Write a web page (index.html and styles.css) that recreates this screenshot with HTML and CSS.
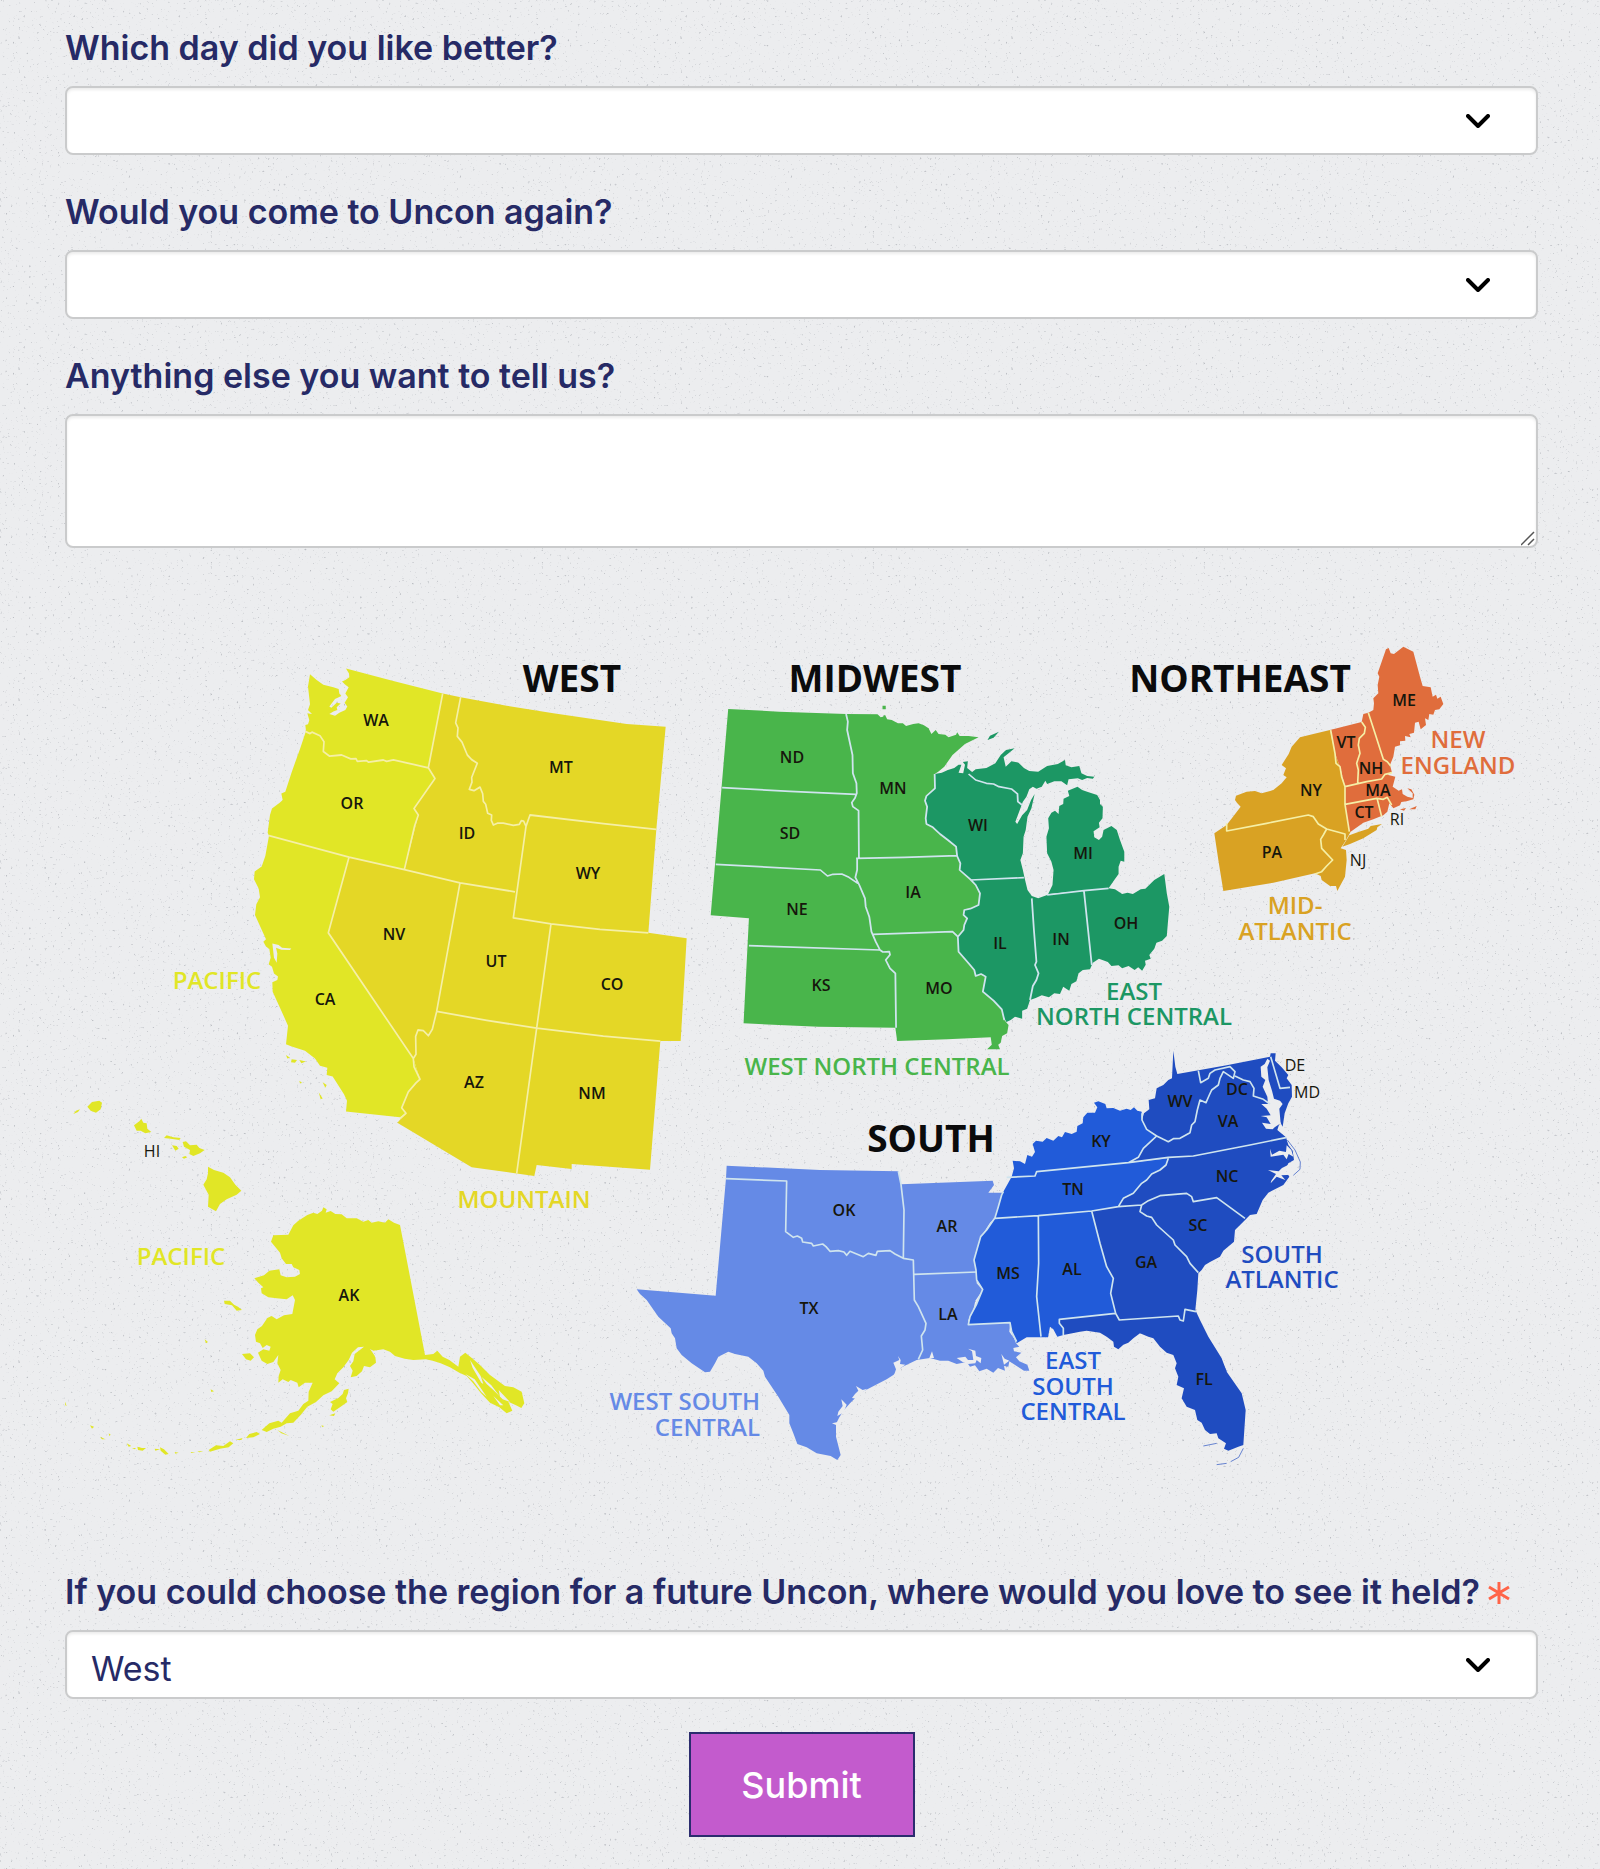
FILE: index.html
```html
<!DOCTYPE html>
<html lang="en">
<head>
<meta charset="utf-8">
<meta name="viewport" content="width=device-width, initial-scale=1">
<title>Uncon feedback</title>
<link rel="stylesheet" href="styles.css">
</head>
<body>
<form class="survey">
  <div class="field">
    <label class="field-label" for="day">Which day did you like better?</label>
    <select class="control select" id="day"><option value=""></option><option>Saturday</option><option>Sunday</option></select>
  </div>
  <div class="field">
    <label class="field-label" for="again">Would you come to Uncon again?</label>
    <select class="control select" id="again"><option value=""></option><option>Yes</option><option>No</option></select>
  </div>
  <div class="field">
    <label class="field-label" for="more">Anything else you want to tell us?</label>
    <textarea class="control textarea" id="more"></textarea>
  </div>

  <svg class="map" viewBox="65 581 1473 954" role="img" aria-label="Map of the United States by region">
    <!-- West -->
    <g transform="translate(220 640) scale(.33333 .35714)">
      <path class="mountain" d="M668 150L722 160 860 184 1000 205 1220 235 1337 243 1309 530 1285 820 1400 835 1382 1123 1321 1123 1290 1483 1055 1467 1055 1481 950 1470 943 1501 890 1494 755 1476 532 1352 558 1325 545 1310 565 1265 600 1230 580 1172 325 820 387 608 553 643 595 490 582 472 645 388 625 358Z"/>
      <path class="pacific" d="M270 96L290 112 310 125 340 132 356 137 358 150 364 157 345 165 328 186 334 190 350 176 362 178 350 188 352 196 340 200 328 207 345 212 358 204 376 196 382 186 374 176 384 160 376 150 386 132 376 125 366 116 376 112 388 104 387 94 378 80 520 115 668 150 625 358 645 388 582 472 595 490 553 643 387 608 325 820 580 1172 600 1230 588 1240 565 1265 545 1310 558 1325 540 1336 378 1320 381 1290 372 1272 350 1240 338 1222 320 1218 322 1198 300 1192 285 1172 255 1150 215 1138 198 1132 204 1080 185 1040 158 985 157 958 172 952 174 942 162 934 156 915 146 908 152 890 148 865 138 858 130 845 138 838 105 770 109 740 120 720 116 696 102 670 104 648 125 634 136 605 147 548 143 540 150 490 156 472 180 455 188 448 184 430 196 425 215 370 240 305 258 255 256 238 264 236 268 225 262 205 276 207 264 196 270 180 264 130Z"/>
      <path class="pacific" d="M198 1162l12 8-8 2zM215 1174l16 2-6 8-12-2zM238 1176l20 4-14 5zM238 1234l8 6-6 2zM308 1238l12 8-4 8zM296 1266l12 18-6 2z"/>
      <path class="water" d="M157 850L176 854 186 862 214 864 210 868 184 867 168 862 172 878 170 904 162 890Z"/>
      <path class="border warm" d="M256 256L270 262 276 258 300 268 312 285 310 312 328 325 365 322 392 333 408 332 412 340 440 338 446 342 490 336 500 340 520 336 580 348 625 358M668 150L625 358 645 388 582 472 595 490 584 520 553 643M147 548L387 608 325 820 580 1172M387 608L553 643 720 680 885 705M722 160L707 232 714 246 712 270 726 286 742 322 755 335 772 345 755 385 756 398 748 418 762 422 780 412 788 430 790 452 797 460 803 485 815 490 814 505 820 518 832 513 850 513 880 519 898 516 904 506 911 507 918 522M1309 530L1150 514 930 490 918 522 880 778 993 795 1140 810 1285 820M993 795L950 1087 890 1494M720 680L650 1040 637 1090 625 1108 610 1094 594 1092 587 1110 588 1160 580 1172 582 1195 600 1230 588 1240 565 1265 545 1310 558 1325 540 1340M650 1040L800 1065 950 1087 1150 1109 1321 1123"/>
    </g>
    <!-- Alaska and Hawaii -->
    <g class="pacific" transform="translate(60 1080) scale(.33333)">
      <path d="M790 382L800 388 797 398 812 393 826 402 845 403 860 415 890 415 910 425 925 420 935 428 955 424 975 428 985 418 1002 428 1020 435 1050 590 1095 825 1120 822 1132 812 1148 830 1168 840 1195 860 1200 830 1216 818 1240 838 1260 855 1290 885 1335 918 1360 922 1385 935 1393 970 1384 984 1368 976 1345 965 1357 992 1340 1000 1318 982 1290 968 1262 938 1238 908 1220 888 1198 878 1170 862 1142 850 1118 842 1098 838 1060 840 1034 836 1005 828 990 815 970 808 940 812 930 806 946 830 948 848 930 862 912 858 906 874 890 888 872 892 878 872 870 858 880 844 884 822 912 800 894 802 876 818 866 840 850 862 832 880 824 898 838 910 815 934 790 946 768 966 742 980 722 1005 700 1028 680 1030 662 1040 640 1046 620 1056 605 1050 628 1030 655 1022 665 1028 690 1000 715 992 730 972 745 962 746 935 758 908 735 908 716 922 712 908 692 900 685 906 668 898 655 908 656 888 662 870 652 850 655 825 640 846 622 852 605 842 594 818 610 808 628 812 632 800 620 795 608 804 600 790 588 785 585 765 592 748 606 738 622 714 635 708 650 718 672 706 697 702 705 660 698 646 680 658 650 655 625 652 605 640 603 625 610 622 595 608 583 595 612 586 628 572 658 568 662 586 680 592 705 590 720 582 718 570 700 562 695 552 678 552 665 535 660 518 633 485 640 466 685 464 700 436 715 422 742 405 760 398 772 402 786 392Z"/>
      <path d="M492 662L510 662 522 674 534 680 546 690 530 692 516 676 494 672ZM546 822L570 820 582 832 572 842 558 838ZM866 926L864 940 858 955 862 966 842 980 820 995 812 988 818 972 810 966 835 954 848 942 852 930ZM808 1006l18-6-4 8zM558 1074L568 1062 590 1056 600 1062 580 1072ZM490 1098L510 1084 520 1090 506 1102 480 1106 450 1115 446 1110 468 1096ZM526 1080l22-6-4 6zM300 1102l12 6 14 14-10 2-14-12zM284 1106l16 2-14 4zM232 1100l14 4 12 0-10 8-14-2zM200 1090l14 8-8 2zM120 1070l16 8-10 0zM90 1036l12 4-6 6zM392 1116l14 1-12 2zM412 1114l18 0-12 3zM216 1104l12 0-4 4zM146 1060l6 4-4 4zM12 958l8 20-4-2zM434 778l10 8-6 4zM452 928l10 6-8 2zM652 1050l36 18-24-8zM784 1036l8 2-4 4zM344 1116l12 2-10 3z"/>
      <path class="water" d="M700 566l8 12-14-10zM950 818l24 8-10 14-4 14-12-4 6-16-10-4zM980 824l16 6-14 4zM1230 840L1262 888 1270 912 1264 908 1238 864ZM1216 882L1244 898 1280 950 1264 936 1240 904ZM1264 890L1294 916 1320 950 1316 930 1350 966 1328 958 1300 930 1280 912ZM1300 948L1330 976 1320 976Z"/>
      <path d="M82 80L96 66 118 62 126 68 122 88 108 98 92 92ZM40 102l8-10 12-4-6 8zM222 136L238 124 244 116 250 128 260 130 262 146 274 156 256 160 242 152 230 152ZM312 174L320 166 340 172 362 174 358 180 332 176ZM336 196L350 198 356 206 346 212ZM366 232l10-4 6 4-10 4zM368 186L378 184 390 196 410 194 418 204 434 210 420 220 400 228 388 222 390 210 372 200ZM444 260L462 270 490 278 510 292 526 314 544 332 530 344 500 358 480 372 468 394 444 380 446 344 430 314 440 298 444 280Z"/>
    </g>
    <!-- Midwest -->
    <g transform="translate(690 640) scale(.35714 .33333)">
      <path class="west-north" d="M107 207L250 215 437 222 525 223 534 232 540 230 546 224 552 238 565 240 582 250 596 250 605 258 625 252 640 250 655 256 668 265 676 282 688 270 696 282 715 284 724 292 745 284 748 277 755 288 780 288 808 292 770 312 735 345 712 380 695 395 685 402 686 445 662 468 658 482 664 500 660 535 662 552 680 562 700 582 722 600 745 620 748 648 757 670 755 690 785 718 800 735 812 760 808 795 785 806 768 810 766 825 776 835 768 855 766 870 750 890 752 935 780 970 796 990 800 1008 815 1002 828 1010 820 1055 850 1082 873 1108 880 1140 892 1155 888 1180 874 1188 870 1208 863 1214 868 1228 832 1228 845 1214 842 1192 720 1198 580 1203 575 1163 360 1160 150 1150 165 835 58 826ZM539 197h9v11h-9z"/>
      <path class="east-north" d="M685 402L705 398 722 390 740 384 752 374 760 374 752 398 765 400 770 374 764 366 778 364 776 384 790 396 800 388 830 384 855 370 870 345 885 330 909 325 892 340 878 352 884 380 900 364 920 368 935 384 950 393 975 395 1000 378 1030 372 1050 360 1052 376 1068 382 1090 378 1096 400 1112 408 1132 410 1128 416 1112 414 1098 420 1086 415 1060 418 1056 436 1040 424 1020 424 1000 432 995 422 985 440 970 446 960 440 950 448 942 470 932 485 920 520 911 545 916 552 930 526 944 510 955 480 965 462 956 505 945 530 940 570 934 590 932 640 925 660 932 690 937 715 945 750 957 768 975 775 1000 765 1103 752 1172 745 1190 748 1210 762 1225 758 1240 762 1262 748 1275 746 1300 720 1328 702 1335 760 1342 800 1338 850 1335 888 1322 902 1306 908 1300 926 1286 945 1290 956 1274 962 1276 974 1266 992 1255 982 1245 990 1228 978 1210 985 1200 976 1180 978 1170 966 1145 956 1128 968 1120 988 1100 990 1088 1000 1082 1024 1068 1032 1062 1052 1045 1040 1036 1062 1020 1060 1005 1072 985 1066 968 1074 952 1080 944 1106 930 1112 930 1136 910 1130 898 1140 886 1146 878 1130 873 1108 850 1082 820 1055 828 1010 815 1002 800 1008 796 990 780 970 752 935 750 890 766 870 768 855 776 835 766 825 768 810 785 806 808 795 812 760 800 735 785 718 755 690 757 670 748 648 745 620 722 600 700 582 680 562 662 552 660 535 664 500 658 482 662 468 686 445Z"/>
      <path class="east-north" d="M1003 762L1015 735 1018 690 1012 665 1000 640 998 590 1005 565 1003 535 1012 518 1022 512 1032 522 1034 498 1045 492 1046 476 1062 468 1058 452 1085 440 1098 450 1112 455 1140 465 1148 480 1148 492 1156 500 1155 535 1145 548 1147 562 1130 574 1132 592 1145 600 1154 590 1158 570 1180 558 1195 570 1204 600 1216 635 1216 665 1206 662 1200 680 1200 702 1188 720 1172 745 1103 752ZM833 300L840 287 865 275 850 293Z"/>
      <path class="border cool" d="M90 443L280 454 465 463M437 222L442 245 440 270 450 320 455 345 456 400 466 430 467 460 462 474 453 488 456 500 472 512 473 653M72 673L365 690 385 708 400 703 425 702 445 712 470 730M465 655L600 652 748 647M468 655L468 690 463 712 474 735 490 775 492 800 502 830 508 875 520 905 532 930M512 883L735 875 750 890M165 917L532 930 540 936 558 935 560 944 548 960 560 985 575 1000 577 1163M685 402L686 445 662 468 658 482 664 500 660 535 662 552 680 562 700 582 722 600 745 620 748 648 757 670 755 690 785 718 800 735 812 760 808 795 785 806 768 810 766 825 776 835 768 855 766 870 750 890 752 935 780 970 796 990 800 1008 815 1002 828 1010 820 1055 850 1082 873 1108 880 1140M780 402L800 420 830 430 850 432 865 440 900 447 917 462 918 485 930 495M785 720L935 713M957 775L963 870 970 965 966 975 976 1000 970 1020 960 1038 952 1080M1103 752L1125 975M1000 765L1103 752 1172 745"/>
    </g>
    <!-- Northeast -->
    <g transform="translate(1100 630) scale(.33333)">
      <path class="mid-atlantic" d="M690 300L640 312 600 322 575 350 566 372 545 405 558 415 550 435 560 442 545 460 520 480 485 490 465 483 440 485 408 497 405 510 412 520 422 530 380 585 343 610 355 690 370 783 520 758 645 730 662 738 665 750 690 768 708 768 712 783 720 768 735 740 740 690 738 660 722 655 735 635 752 605 735 523 735 470 720 410 705 370ZM727 650L736 636 748 616 775 606 805 596 812 588 846 582 832 592 830 600 790 625 750 642Z"/>
      <path class="new-england" d="M690 300L785 276 790 252 805 248 820 240 822 220 820 205 835 190 833 165 838 140 833 130 845 95 858 58 866 54 872 70 882 72 910 50 940 65 960 140 968 168 992 172 998 200 1008 194 1012 206 1022 200 1030 222 1018 238 1005 240 1000 254 988 252 985 270 975 265 978 285 962 298 956 275 945 278 942 308 928 312 932 322 915 318 916 332 900 334 900 346 885 350 880 380 870 405 876 428 862 434 886 440 878 470 896 482 906 478 908 492 922 500 938 504 938 490 922 475 934 478 943 494 940 508 920 514 904 516 900 526 880 535 868 520 862 545 850 556 820 568 790 578 752 605 745 600 735 523 735 470 720 410 705 370ZM900 538l18-4-6 8zM928 538l22-10-4 10z"/>
      <path class="border warm" d="M692 300L705 370 708 400 720 410 725 440 735 470 735 523 748 605M785 276L796 292 793 310 778 325 775 345 780 370 770 400 775 420 773 460M805 248L825 310 850 388 862 395 872 408M735 470L800 455 845 447 855 433 876 428M735 523L830 505 850 508 862 502 875 525M832 508L845 560M380 580L380 603 500 580 625 555 640 560 655 582 680 597 735 612 735 630M680 597L670 615 662 628 665 655 698 690 680 708 665 725 645 732"/>
    </g>
    <!-- South -->
    <g transform="translate(620 1130) scale(.33333)">
      <path class="west-south" d="M320 107L600 120 835 124 843 163 1118 152 1122 165 1105 188 1150 188 1140 215 1135 235 1125 265 1110 278 1090 310 1068 365 1064 385 1070 410 1070 460 1088 480 1066 512 1060 540 1045 570 1045 583 1170 578 1168 605 1182 625 1188 640 1198 650 1180 654 1182 664 1204 668 1188 682 1198 694 1222 704 1228 722 1212 722 1190 708 1168 694 1165 710 1152 708 1155 722 1134 714 1120 728 1100 716 1078 724 1065 706 1050 710 1040 696 1010 702 985 692 960 692 930 684 890 690 845 712 820 735 800 748 745 776 720 790 705 805 690 820 672 840 658 862 648 882 648 920 662 975 652 990 632 978 590 970 560 952 532 942 520 910 508 880 508 855 475 800 435 740 430 722 410 700 385 680 345 672 325 665 295 680 285 700 270 725 255 727 215 700 185 675 170 655 165 625 155 610 152 595 115 560 80 510 60 492 50 478 287 497 318 145Z"/>
      <path class="water" d="M820 698L838 690 834 678 842 690 840 702 856 704 842 714 830 742 822 736 828 718ZM705 792L715 782 708 768 728 780 742 776 722 792 708 806 696 804ZM655 845L668 828 664 808 680 824 670 848 652 858ZM636 880L654 876 650 886ZM1010 684L1036 680 1044 690 1060 690 1056 664 1044 656 1066 662 1068 678 1084 684 1082 700 1070 690 1066 700 1044 702 1028 696ZM928 684l8-20 6 20zM1144 672L1154 686 1168 692 1152 704Z"/>
      <path class="border cool" d="M318 146L500 153 497 305 520 322 532 318 545 325 548 336 575 340 580 348 608 342 618 350 630 364 655 362 672 366 680 376 690 364 710 372 730 380 745 370 768 376 772 364 810 362 825 372 850 385 880 390 883 510 895 530 918 580 915 600 904 618 908 660 895 688M835 124L843 163 852 240 850 385M883 433L1070 426"/>
    </g>
    <g transform="translate(960 1030) scale(.33333)">
      <path class="east-south" d="M155 440L162 415 158 392 180 394 195 402 202 375 216 380 225 366 218 342 228 332 248 335 260 324 280 332 295 318 306 322 315 306 335 312 350 305 352 288 368 280 370 262 382 248 405 248 412 232 402 218 415 214 436 222 440 235 460 234 480 242 500 236 512 240 522 232 532 242 545 245 546 270 560 298 590 318 575 332 550 355 535 382 505 398 625 385 618 405 600 420 575 432 560 450 545 460 520 490 490 505 475 530 395 543 420 640 440 710 460 745 452 790 467 850 298 868 298 880 310 895 310 915 292 920 280 898 270 890 264 922 200 922 170 940 155 905 150 878 25 884 30 860 50 822 68 778 50 750 48 720 42 690 52 655 62 620 80 600 105 563 115 530 125 495 130 485Z"/>
      <path class="south-atlantic" d="M640 62L646 110 652 132 800 106 930 80 932 70 947 70 945 92 965 112 985 135 980 145 995 165 996 200 985 220 974 250 968 290 960 275 952 300 978 322 985 345 998 362 1002 390 985 400 976 420 988 440 970 465 925 488 908 510 890 552 870 555 850 575 825 600 822 635 790 662 780 680 750 696 735 705 725 720 715 730 712 780 706 840 720 870 745 920 785 985 800 1025 845 1090 857 1140 850 1245 835 1250 805 1262 792 1256 798 1240 775 1225 770 1210 750 1212 735 1200 725 1178 712 1170 705 1140 680 1130 665 1105 672 1075 650 1065 655 1040 645 1015 650 1000 640 975 620 968 600 950 580 925 565 920 540 910 520 925 505 938 490 944 475 958 462 950 460 935 440 920 420 908 400 905 380 902 360 905 310 915 310 895 298 880 298 868 467 850 452 790 460 745 440 710 420 640 395 543 475 530 490 505 520 490 545 460 560 450 575 432 600 420 618 405 625 385 505 398 535 382 550 355 575 332 590 318 560 298 546 270 552 250 568 238 566 210 585 205 590 175 610 165 625 150 636 145Z"/>
      <path class="water" d="M902 110L914 102 922 86 930 92 922 112 926 150 936 182 942 206 960 212 968 222 958 236 962 280 944 292 938 298 918 296 906 278 932 282 920 262 902 258 932 256 920 236 904 222 924 222 922 200 908 170 916 150 904 140ZM930 356L936 374 958 362 978 366 980 346 994 360 1000 380 986 372 980 388 970 374 932 380ZM924 420L956 424 966 414 990 402 1002 408 978 424 996 434 964 436 976 450 950 440 932 460 934 452 948 432Z"/>
      <path class="shore south" d="M982 330L1005 360 1021 396 1020 418 1000 436M850 1255L836 1282 812 1295M800 1300L770 1304M770 1240L730 1248M780 985L800 1025"/>
      <path class="border cool" d="M130 485L125 495 115 530 105 563 80 600 62 620 52 655 42 690 48 720 50 750 68 778 50 822 30 860 25 884 150 878 155 905 170 935M590 318L610 328 625 335 640 326 660 325 690 308 695 285 705 275 712 240 720 210 738 218 748 195 755 180 775 165 780 145 790 125 820 145 825 125 810 110 765 120 750 130 745 145 722 158 715 122M825 138L850 150 870 155 882 175 880 198 910 208 930 222M505 398L625 382 700 378 870 345 978 323M545 525L565 512 600 497 680 490 695 500 700 515 770 503 855 565M545 525L540 545 560 558 575 562 590 585 640 630 645 645 680 680 690 700 715 728M467 850L478 870 655 858 660 870 670 873 675 838 708 845M140 442L225 438 230 425 505 398M105 565L235 557 395 543 475 530 545 525M235 557L236 700 230 800 243 920M932 80L960 175 990 172M546 250L546 270 560 298 590 318 575 332 550 355 535 382 505 398M625 385L618 405 600 420 575 432 560 450 545 460 520 490 490 505 475 530M395 543L420 640 440 710 460 745 452 790 467 850 298 868 298 880 310 895 310 915"/>
    </g>

    <g class="region-name">
      <text x="572" y="692">WEST</text><text x="875" y="692">MIDWEST</text><text x="1240" y="692">NORTHEAST</text><text x="931" y="1152">SOUTH</text>
    </g>
    <g class="division-name">
      <text class="pacific" x="217" y="989">PACIFIC</text><text class="pacific" x="181" y="1265">PACIFIC</text>
      <text class="mountain" x="524" y="1208">MOUNTAIN</text>
      <text class="west-north" x="877" y="1075">WEST NORTH CENTRAL</text>
      <text class="east-north" x="1134" y="1000">EAST</text><text class="east-north" x="1134" y="1025">NORTH CENTRAL</text>
      <text class="new-england" x="1458" y="748">NEW</text><text class="new-england" x="1458" y="774">ENGLAND</text>
      <text class="mid-atlantic" x="1295" y="914">MID-</text><text class="mid-atlantic" x="1295" y="940">ATLANTIC</text>
      <text class="west-south flush" x="760" y="1410">WEST SOUTH</text><text class="west-south flush" x="760" y="1436">CENTRAL</text>
      <text class="east-south" x="1073" y="1369">EAST</text><text class="east-south" x="1073" y="1395">SOUTH</text><text class="east-south" x="1073" y="1420">CENTRAL</text>
      <text class="south-atlantic" x="1282" y="1263">SOUTH</text><text class="south-atlantic" x="1282" y="1288">ATLANTIC</text>
    </g>
    <g class="state-name">
      <text x="376" y="726">WA</text><text x="352" y="809">OR</text><text x="467" y="839">ID</text><text x="561" y="773">MT</text><text x="588" y="879">WY</text><text x="394" y="940">NV</text><text x="496" y="967">UT</text><text x="325" y="1005">CA</text><text x="612" y="990">CO</text><text x="474" y="1088">AZ</text><text x="592" y="1099">NM</text><text x="349" y="1301">AK</text>
      <text x="792" y="763">ND</text><text x="893" y="794">MN</text><text x="790" y="839">SD</text><text x="797" y="915">NE</text><text x="913" y="898">IA</text><text x="821" y="991">KS</text><text x="939" y="994">MO</text><text x="978" y="831">WI</text><text x="1083" y="859">MI</text><text x="1000" y="949">IL</text><text x="1061" y="945">IN</text><text x="1126" y="929">OH</text>
      <text x="1404" y="706">ME</text><text x="1346" y="748">VT</text><text x="1371" y="774">NH</text><text x="1378" y="796">MA</text><text x="1364" y="818">CT</text><text x="1311" y="796">NY</text><text x="1272" y="858">PA</text>
      <text x="844" y="1216">OK</text><text x="947" y="1232">AR</text><text x="809" y="1314">TX</text><text x="948" y="1320">LA</text><text x="1008" y="1279">MS</text><text x="1072" y="1275">AL</text><text x="1146" y="1268">GA</text><text x="1198" y="1231">SC</text><text x="1227" y="1182">NC</text><text x="1228" y="1127">VA</text><text x="1237" y="1095">DC</text><text x="1180" y="1107">WV</text><text x="1101" y="1147">KY</text><text x="1073" y="1195">TN</text><text x="1204" y="1385">FL</text>
    </g>
    <g class="state-name light">
      <text x="152" y="1157">HI</text><text x="1397" y="825">RI</text><text x="1358" y="866">NJ</text><text x="1295" y="1071">DE</text><text x="1307" y="1098">MD</text>
    </g>
  </svg>

  <div class="field">
    <label class="field-label" for="region">If you could choose the region for a future Uncon, where would you love to see it held?<svg class="required" viewBox="0 0 22 22" aria-hidden="true"><path d="M11 0v22M1 5l20 12M21 5L1 17"/></svg></label>
    <select class="control select" id="region" required><option>West</option><option>Midwest</option><option>Northeast</option><option>South</option></select>
  </div>
  <button class="submit" type="submit">Submit</button>
</form>
</body>
</html>
```
FILE: styles.css
```css
* { box-sizing: border-box; }

body {
  margin: 0;
  color: #262a66;
  font-family: Inter, "Liberation Sans", sans-serif;
  background-color: #ecedef;
  background-image: url("data:image/svg+xml,%3Csvg xmlns='http://www.w3.org/2000/svg' width='331' height='331'%3E%3Cfilter id='d' x='0' y='0' width='100%25' height='100%25' color-interpolation-filters='sRGB'%3E%3CfeTurbulence type='fractalNoise' baseFrequency='.38' numOctaves='2' seed='8' stitchTiles='stitch'/%3E%3CfeColorMatrix values='0 0 0 0 .74 0 0 0 0 .75 0 0 0 0 .77 5 0 0 0 -3.4'/%3E%3C/filter%3E%3Crect width='331' height='331' filter='url(%23d)'/%3E%3C/svg%3E");
}

.survey {
  display: flex;
  flex-direction: column;
  gap: 33px;
  padding: 24px 62px 32px 65px;
}

.field {
  display: flex;
  flex-direction: column;
  gap: 14px;
}

.field-label {
  font-size: 34px;
  font-weight: 600;
  line-height: 48px;
}

.required {
  width: 22px;
  height: 22px;
  margin-left: 8px;
  fill: none;
  stroke: #ff6448;
  stroke-width: 3;
}

.control {
  width: 100%;
  color: inherit;
  font-family: inherit;
  font-size: 34px;
  background-color: #fff;
  border: 2px solid #cacbcc;
  border-radius: 8px;
  box-shadow: inset 0 2px 3px rgba(0, 0, 0, .08);
}

.select {
  height: 69px;
  padding: 8px 80px 0 24px;
  appearance: none;
  background-image: url("data:image/svg+xml,%3Csvg xmlns='http://www.w3.org/2000/svg' width='24' height='14' fill='none' stroke='%23000' stroke-width='4' stroke-linecap='round' stroke-linejoin='round'%3E%3Cpath d='M2 2l10 10L22 2'/%3E%3C/svg%3E");
  background-repeat: no-repeat;
  background-position: right 46px center;
}

.textarea {
  display: block;
  height: 134px;
  padding: 8px 24px;
  resize: vertical;
}

.textarea::-webkit-resizer {
  background-image: url("data:image/svg+xml,%3Csvg xmlns='http://www.w3.org/2000/svg' width='15' height='15' fill='none' stroke='%23555' stroke-width='1.5'%3E%3Cpath d='M0 14L13 1M7 14l6-6'/%3E%3C/svg%3E");
  background-repeat: no-repeat;
}

.map {
  display: block;
  width: 100%;
  height: auto;
  font-family: "Open Sans", "Noto Sans", sans-serif;
  text-anchor: middle;
}

.pacific { fill: #e1e626; }
.mountain { fill: #e4d726; }
.west-north { fill: #49b54b; }
.east-north { fill: #1c9764; }
.new-england { fill: #e06d3c; }
.mid-atlantic { fill: #d9a223; }
.west-south { fill: #658ae6; }
.east-south { fill: #215bd9; }
.south-atlantic { fill: #1f4cc0; }
.water { fill: #ecedef; }

.border, .shore {
  fill: none;
  stroke-width: 5;
  stroke-linejoin: round;
}
.border.warm { stroke: #f5efa6; }
.border.cool { stroke: #cfe4ee; }
.shore.south { stroke: #1f4cc0; stroke-width: 2; }

.region-name { font-size: 37px; font-weight: 700; fill: #0b0b0c; }
.division-name { font-size: 24px; font-weight: 600; }
.flush { text-anchor: end; }
.state-name { font-size: 16px; font-weight: 600; fill: #16160c; }
.state-name.light { font-weight: 400; }

.submit {
  align-self: center;
  width: 226px;
  height: 105px;
  color: #fff;
  font-family: inherit;
  font-size: 36px;
  font-weight: 500;
  background: #c35bcd;
  border: 2px solid #2b2c6e;
}
```
